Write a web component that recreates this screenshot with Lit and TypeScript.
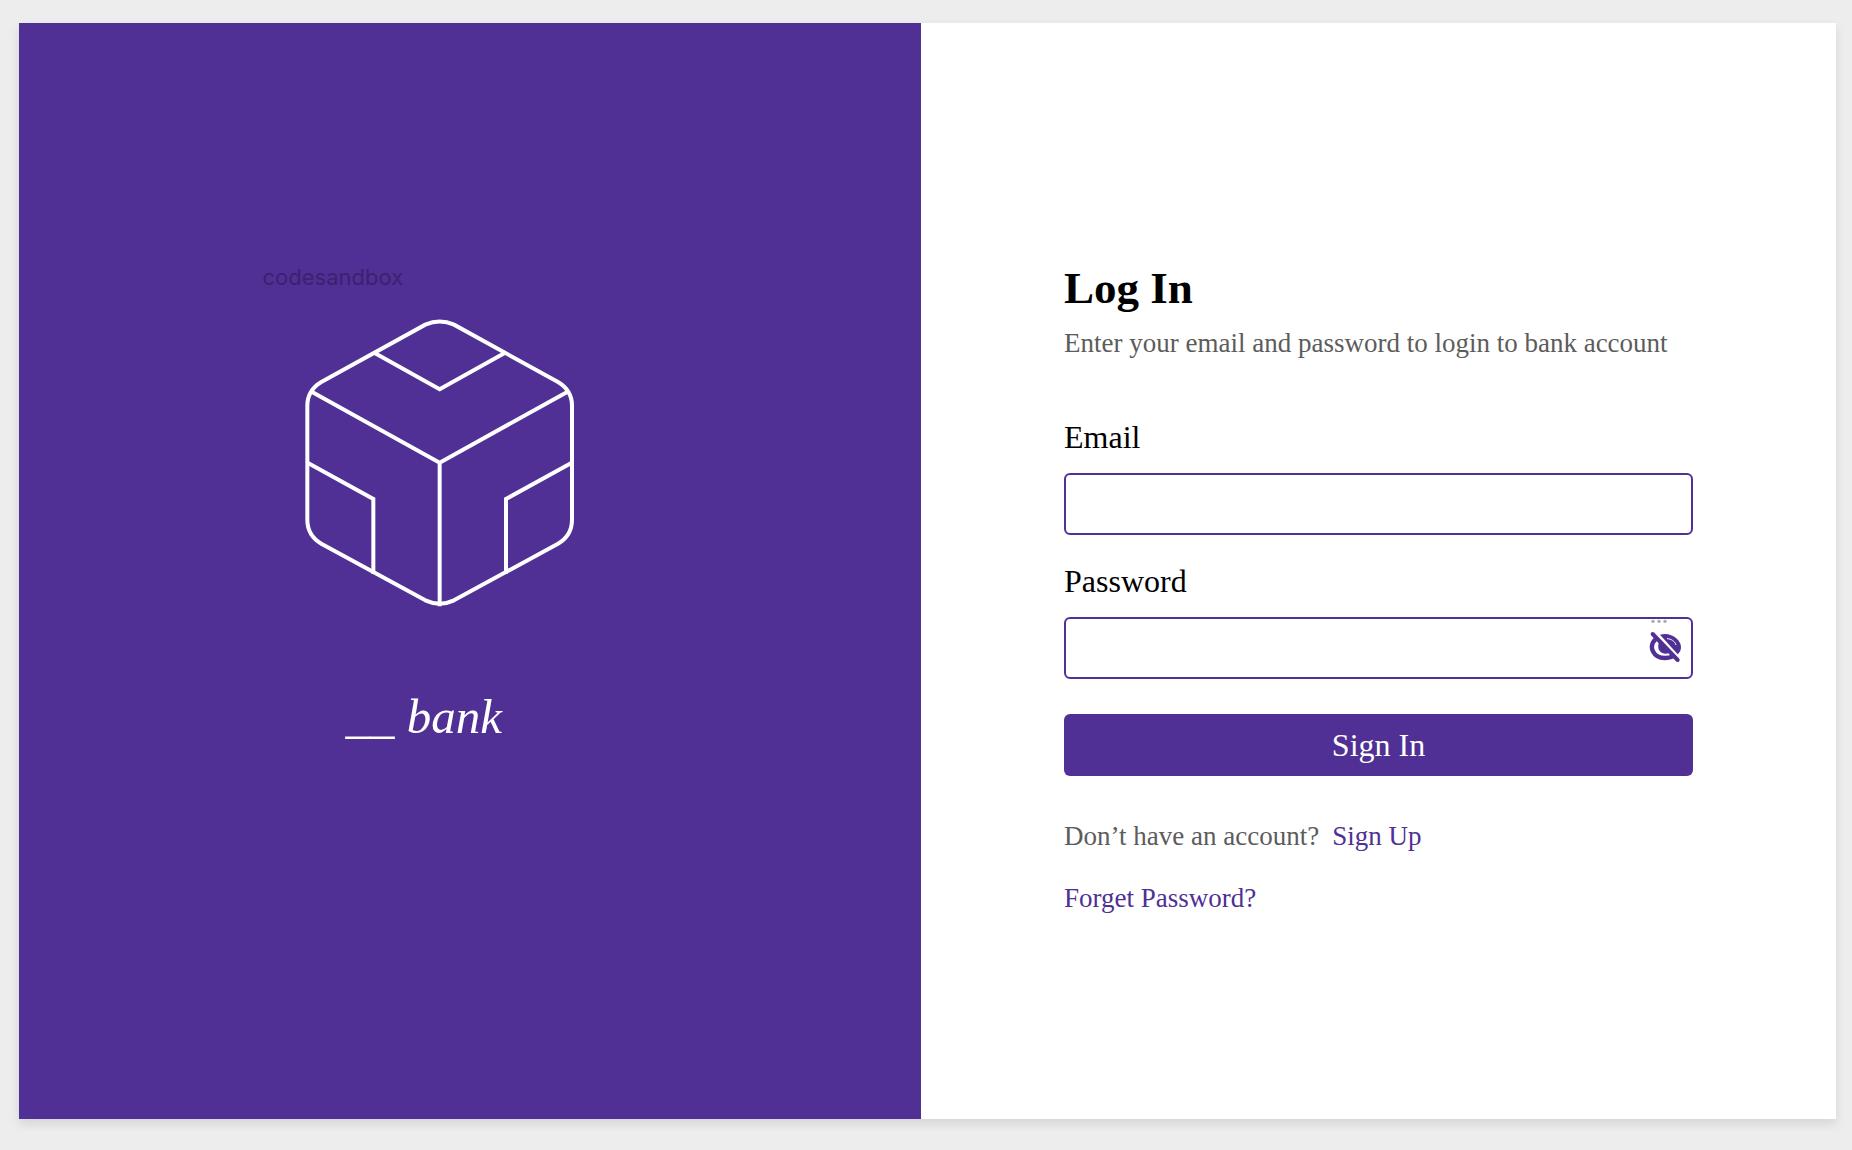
import { LitElement, html, css } from "lit";
import { customElement, state } from "lit/decorators.js";

@customElement("bank-brand")
export class BankBrand extends LitElement {
  static styles = css`
    :host {
      display: block;
      box-sizing: border-box;
      padding: 240px 0 64px 27%;
      background: #503094;
      color: #fff;
    }
    .caption {
      margin: 0;
      font: 400 22px/28px Inter, "Liberation Sans", sans-serif;
      color: #3b2170;
    }
    .cube {
      display: block;
      width: 272px;
      height: 290px;
      margin: 26px 0 0 41px;
    }
    .name {
      margin: 80px 0 0 83px;
      font: italic 400 49px/60px "Liberation Serif", serif;
    }
  `;

  render() {
    return html`
      <p class="caption">codesandbox</p>
      <svg class="cube" viewBox="191 200 816 870" fill="none" stroke="#fff" stroke-width="12" aria-hidden="true">
        <path d="M555 223Q598 204 641 223L953 395Q995 420 995 466V808Q995 855 953 880L641 1050Q598 1070 555 1050L243 880Q201 855 201 808V466Q201 420 243 395Z" />
        <path d="M214 424L598 637L982 424M598 637V1068" />
        <path d="M399 306L598 417L797 306" />
        <path d="M203 638L399 746V970M993 638L797 746V970" />
      </svg>
      <p class="name">__ bank</p>
    `;
  }
}

@customElement("login-form")
export class LoginForm extends LitElement {
  @state() private reveal = false;

  static styles = css`
    :host {
      display: block;
      box-sizing: border-box;
      padding: 239px 143px 64px;
      font-family: "Liberation Serif", serif;
      color: #000;
    }
    * {
      box-sizing: border-box;
    }
    .title {
      margin: 0;
      font-size: 45px;
      line-height: 52px;
      font-weight: 700;
    }
    .lead,
    .note {
      margin: 0;
      font-size: 27px;
      line-height: 32px;
      color: #5c5c5c;
    }
    .lead {
      margin-top: 13px;
    }
    form {
      display: flex;
      flex-direction: column;
      margin-top: 58px;
    }
    .label {
      font-size: 32px;
      line-height: 40px;
      margin-bottom: 16px;
    }
    .field {
      position: relative;
      margin-bottom: 26px;
    }
    .input {
      display: block;
      width: 100%;
      height: 62px;
      padding: 0 16px;
      border: 2px solid #503094;
      border-radius: 6px;
      background: transparent;
      font: 27px/32px "Liberation Serif", serif;
    }
    .secret {
      padding-right: 56px;
    }
    .toggle {
      position: absolute;
      top: 2px;
      right: 12px;
      display: block;
      width: 32px;
      height: 44px;
      padding: 0;
      border: 0;
      background: none;
    }
    .eye {
      display: block;
      width: 32px;
      height: 44px;
    }
    .submit {
      height: 62px;
      margin-top: 9px;
      border: 0;
      border-radius: 6px;
      background: #503094;
      color: #fff;
      font: 32px/40px "Liberation Serif", serif;
    }
    .links {
      display: grid;
      gap: 30px;
      margin-top: 44px;
    }
    .note {
      display: flex;
      gap: 13px;
    }
    a {
      color: #503094;
      text-decoration: none;
    }
  `;

  private toggle() {
    this.reveal = !this.reveal;
  }

  render() {
    return html`
      <h1 class="title">Log In</h1>
      <p class="lead">Enter your email and password to login to bank account</p>
      <form @submit=${(e: Event) => e.preventDefault()}>
        <label class="label" for="email">Email</label>
        <div class="field">
          <input class="input" id="email" type="email" autocomplete="email" />
        </div>
        <label class="label" for="password">Password</label>
        <div class="field">
          <input class="input secret" id="password" type=${this.reveal ? "text" : "password"} />
          <button class="toggle" type="button" aria-label="Show password" @click=${this.toggle}>
            <svg class="eye" viewBox="0 0 96 132" fill="none" aria-hidden="true">
              <g fill="#aaa">
                <circle cx="12" cy="7" r="5" />
                <circle cx="30" cy="7" r="5" />
                <circle cx="48" cy="7" r="5" />
              </g>
              <path d="M20 60C-4 84 14 117 47 117C57 117 66 115 73 110" stroke="#503094" stroke-width="13" />
              <path d="M33 47C66 38 96 62 96 85C96 94 92 100 86 106Z" fill="#503094" />
              <path d="M32 66C22 84 30 104 49 104C57 104 63 101 67 97Z" fill="#503094" />
              <path d="M54 59C66 59 78 67 81 78" stroke="#fff" stroke-width="3" />
              <path d="M15 40L91 118" stroke="#fff" stroke-width="3" />
              <path d="M11 45L86 123" stroke="#503094" stroke-width="12" stroke-linecap="round" />
            </svg>
          </button>
        </div>
        <button class="submit" type="submit">Sign In</button>
      </form>
      <div class="links">
        <p class="note">Don’t have an account? <a href="#signup">Sign Up</a></p>
        <p class="note"><a href="#forgot">Forget Password?</a></p>
      </div>
    `;
  }
}

@customElement("app-root")
export class AppRoot extends LitElement {
  static styles = css`
    :host {
      display: flex;
      box-sizing: border-box;
      min-height: 100vh;
      padding: 23px 16px 31px 19px;
      background: #ededed;
    }
    .card {
      flex: 1;
      display: grid;
      grid-template-columns: 902fr 915fr;
      background: #fff;
      box-shadow: 0 5px 10px rgba(0, 0, 0, 0.1);
    }
  `;

  render() {
    return html`
      <main class="card">
        <bank-brand></bank-brand>
        <login-form></login-form>
      </main>
    `;
  }
}
